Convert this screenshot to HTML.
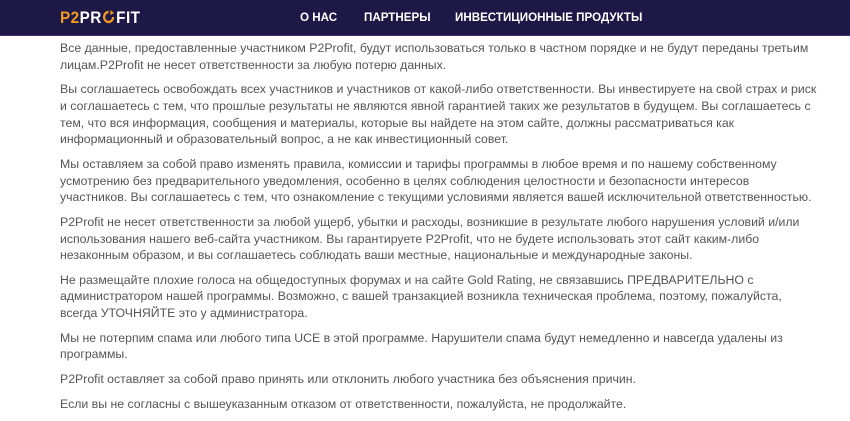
<!DOCTYPE html>
<html><head><meta charset="utf-8">
<style>
*{margin:0;padding:0;box-sizing:border-box}
body{width:850px;height:409px;overflow:hidden;background:#fff;font-family:"Liberation Sans",sans-serif}
.hdr{position:absolute;left:0;top:0;width:850px;height:36px;background:#1e1847;border-bottom:1px solid #3a3570}
.logo{position:absolute;left:60px;top:9px;font-weight:bold;font-size:17px;color:#fff;letter-spacing:0.5px;white-space:nowrap;line-height:18px;transform:scaleX(0.9);transform-origin:left}
.logo .o{color:#f39a1e}
.nav{position:absolute;top:11px;font-weight:bold;font-size:11.6px;color:#fff;white-space:nowrap;line-height:14px}
.content{position:absolute;left:60px;top:40px;color:#555;font-size:12.3px;line-height:16.6px}
.content p{margin-bottom:8.2px;white-space:nowrap}
</style></head><body>
<div class="hdr">
<div class="logo"><span class="o">P2</span>PR<svg width="14" height="14" viewBox="0 0 14 14" style="vertical-align:-1px;margin:0 1px"><path d="M7 2 A5 5 0 1 0 12 7" fill="none" stroke="#f39a1e" stroke-width="2.4"/><path d="M9 0 L13 3 L9 5 Z" fill="#f39a1e"/></svg>FIT</div>
<div class="nav" style="left:300px">О НАС</div>
<div class="nav" style="left:364px">ПАРТНЕРЫ</div>
<div class="nav" style="left:455px">ИНВЕСТИЦИОННЫЕ ПРОДУКТЫ</div>
</div>
<div class="content">
<p>Все данные, предоставленные участником P2Profit, будут использоваться только в частном порядке и не будут переданы третьим<br>лицам.P2Profit не несет ответственности за любую потерю данных.</p>
<p>Вы соглашаетесь освобождать всех участников и участников от какой-либо ответственности. Вы инвестируете на свой страх и риск<br>и соглашаетесь с тем, что прошлые результаты не являются явной гарантией таких же результатов в будущем. Вы соглашаетесь с<br>тем, что вся информация, сообщения и материалы, которые вы найдете на этом сайте, должны рассматриваться как<br>информационный и образовательный вопрос, а не как инвестиционный совет.</p>
<p>Мы оставляем за собой право изменять правила, комиссии и тарифы программы в любое время и по нашему собственному<br>усмотрению без предварительного уведомления, особенно в целях соблюдения целостности и безопасности интересов<br>участников. Вы соглашаетесь с тем, что ознакомление с текущими условиями является вашей исключительной ответственностью.</p>
<p>P2Profit не несет ответственности за любой ущерб, убытки и расходы, возникшие в результате любого нарушения условий и/или<br>использования нашего веб-сайта участником. Вы гарантируете P2Profit, что не будете использовать этот сайт каким-либо<br>незаконным образом, и вы соглашаетесь соблюдать ваши местные, национальные и международные законы.</p>
<p>Не размещайте плохие голоса на общедоступных форумах и на сайте Gold Rating, не связавшись ПРЕДВАРИТЕЛЬНО с<br>администратором нашей программы. Возможно, с вашей транзакцией возникла техническая проблема, поэтому, пожалуйста,<br>всегда УТОЧНЯЙТЕ это у администратора.</p>
<p>Мы не потерпим спама или любого типа UCE в этой программе. Нарушители спама будут немедленно и навсегда удалены из<br>программы.</p>
<p>P2Profit оставляет за собой право принять или отклонить любого участника без объяснения причин.</p>
<p>Если вы не согласны с вышеуказанным отказом от ответственности, пожалуйста, не продолжайте.</p>
</div>
</body></html>
